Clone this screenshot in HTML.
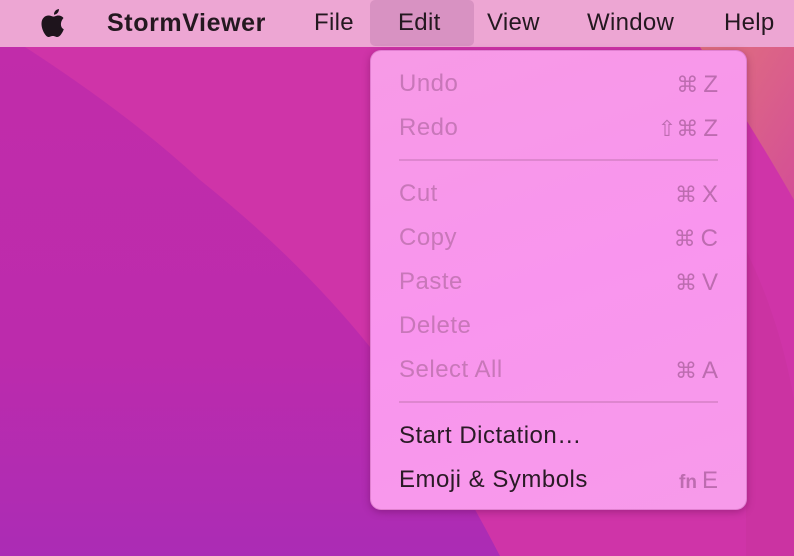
<!DOCTYPE html>
<html><head><meta charset="utf-8">
<style>
*{margin:0;padding:0;box-sizing:border-box}
body{width:794px;height:556px;overflow:hidden;position:relative;font-family:"Liberation Sans",sans-serif;background:#cf34a8}
svg.bg{position:absolute;left:0;top:0}
.bar{position:absolute;left:0;top:0;width:794px;height:47px;background:#eda6d3}
.bar span{position:absolute;top:9px;font-size:24px;color:#241820;letter-spacing:0.3px}
.hl{position:absolute;left:370px;top:0;width:104px;height:46px;background:#d892c2;border-radius:5px}
.menu{position:absolute;left:370px;top:50px;width:377px;height:460px;border-radius:11px;background:linear-gradient(160deg,#f79ae6,#f995ee 50%,#f79aea);box-shadow:0 2px 8px rgba(80,0,60,.35);border:1px solid rgba(190,90,170,.4)}
.it{position:absolute;left:28px;font-size:24px;color:#c877b9;letter-spacing:0.5px}
.it.on{color:#2a1a26}
.sc{position:absolute;right:28px;font-size:24px;color:#bd6cb0;display:flex;align-items:baseline;gap:5px}
.sc i{font-style:normal;font-size:22px;font-family:"DejaVu Sans",sans-serif}
.sep{position:absolute;left:28px;right:28px;height:2px;background:#de86cf}
</style></head><body>
<svg class="bg" width="794" height="556">
<defs>
<linearGradient id="g2" x1="0" y1="0" x2="0" y2="1"><stop offset="0" stop-color="#c12caa"/><stop offset="0.6" stop-color="#bc2bac"/><stop offset="1" stop-color="#ab2cb5"/></linearGradient>
<linearGradient id="g3" x1="0" y1="0" x2="1" y2="1"><stop offset="0" stop-color="#e0707e"/><stop offset="1" stop-color="#d44f96"/></linearGradient>
</defs>
<path d="M0 47 L25 47 Q130 115 200 180 Q300 260 370 347 Q440 440 500 556 L0 556 Z" fill="url(#g2)"/>
<path d="M700 47 L794 47 L794 200 Q760 140 700 47 Z" fill="url(#g3)"/>
<path d="M746 250 Q780 320 794 400 L794 556 L746 556 Z" fill="#c8349e" opacity=".6"/>
</svg>
<div class="bar">
<svg style="position:absolute;left:40px;top:7px" width="28" height="32" viewBox="0 0 28 32"><path d="M19 2c0 3-2 5.5-5 5.7C13.8 4.8 16 2.3 19 2z M23.5 11c-1.3-1.6-3.2-2.5-5-2.5-2.3 0-3.3 1.1-4.9 1.1-1.7 0-3-1.1-5-1.1C5 8.5 1.5 11.3 1.5 16.8 1.5 22.5 5.5 30 8.5 30c1.5 0 2.3-1 4.4-1 2 0 2.6 1 4.4 1 2.9 0 5.6-5.5 6.5-7.8-3.1-1.2-4.3-6.6-.3-11.2z" fill="#1e141c"/></svg>
<span style="left:107px;font-weight:bold;font-size:25px;letter-spacing:0.6px">StormViewer</span>
<span style="left:314px">File</span>
<div class="hl"></div>
<span style="left:398px">Edit</span>
<span style="left:487px">View</span>
<span style="left:587px">Window</span>
<span style="left:724px">Help</span>
</div>
<div class="menu">
<div class="it" style="top:19px">Undo</div><div class="sc" style="top:20px"><i>⌘</i>Z</div>
<div class="it" style="top:63px">Redo</div><div class="sc" style="top:64px"><i>⇧⌘</i>Z</div>
<div class="sep" style="top:108px"></div>
<div class="it" style="top:129px">Cut</div><div class="sc" style="top:130px"><i>⌘</i>X</div>
<div class="it" style="top:173px">Copy</div><div class="sc" style="top:174px"><i>⌘</i>C</div>
<div class="it" style="top:217px">Paste</div><div class="sc" style="top:218px"><i>⌘</i>V</div>
<div class="it" style="top:261px">Delete</div>
<div class="it" style="top:305px">Select All</div><div class="sc" style="top:306px"><i>⌘</i>A</div>
<div class="sep" style="top:350px"></div>
<div class="it on" style="top:371px">Start Dictation…</div>
<div class="it on" style="top:415px">Emoji &amp; Symbols</div><div class="sc" style="top:416px"><span style="font-size:19px;font-weight:bold">fn</span>E</div>
</div>
</body></html>
